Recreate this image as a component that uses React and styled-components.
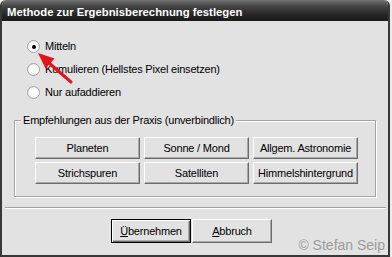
import React from "react";
import styled, { createGlobalStyle } from "styled-components";

const GlobalStyle = createGlobalStyle`
  html, body { margin: 0; padding: 0; background: #ececec; }
  body {
    width: 392px;
    height: 257px;
    overflow: hidden;
    font-family: "Liberation Sans", Arial, sans-serif;
  }
  * { box-sizing: border-box; }
`;

const Window = styled.div`
  position: relative;
  width: 390px;
  height: 257px;
  display: flex;
  flex-direction: column;
  background: #e2e2e2;
  border: 2px solid #383838;
  border-top: 0;
  border-radius: 6px 6px 0 0;
  overflow: hidden;
`;

const TitleBar = styled.div`
  flex: none;
  height: 21px;
  padding: 5px 0 0 5px;
  background: linear-gradient(#727272, #444 30%, #262626 70%, #1a1a1a);
  color: #fff;
  font-weight: bold;
  font-size: 11.3px;
  line-height: 14px;
  white-space: nowrap;
`;

const Content = styled.div`
  flex: 1;
  display: flex;
  flex-direction: column;
  padding-top: 14px;
  font-size: 11px;
  letter-spacing: -0.2px;
  color: #000;
`;

const RadioList = styled.div`
  display: flex;
  flex-direction: column;
  padding-left: 25px;
`;

const RadioRow = styled.label`
  display: flex;
  align-items: center;
  gap: 5px;
  height: 23px;
  line-height: 13px;
`;

const RadioCircle = styled.span`
  position: relative;
  flex: none;
  width: 13px;
  height: 13px;
  border-radius: 50%;
  border: 1px solid #a2a2a2;
  background: radial-gradient(circle at 62% 62%, #fff 40%, #dedede 100%);
  &::after {
    content: "";
    display: ${(p) => (p.$checked ? "block" : "none")};
    position: absolute;
    left: 3.5px;
    top: 3.5px;
    width: 4px;
    height: 4px;
    border-radius: 50%;
    background: #000;
  }
`;

const Group = styled.fieldset`
  margin: 10px 12px 0;
  padding: 10px 17px 12px 20px;
  border: 1px solid #a3a3a3;
  box-shadow: inset 1px 1px #fff, 1px 1px #fff;
  min-width: 0;
`;

const Legend = styled.legend`
  padding: 0 2px;
  margin-left: -14px;
  line-height: 13px;
  background: #e2e2e2;
`;

const Grid = styled.div`
  display: grid;
  grid-template-columns: repeat(3, 105px);
  grid-auto-rows: 22px;
  gap: 3px 4px;
`;

const Button = styled.button`
  display: flex;
  align-items: center;
  justify-content: center;
  width: ${(p) => p.$width || "auto"};
  height: ${(p) => p.$height || "auto"};
  margin: 0;
  padding: 0;
  font-family: inherit;
  font-size: 11px;
  letter-spacing: -0.2px;
  color: #000;
  background: #e2e2e2;
  border: 1px solid;
  border-color: ${(p) => (p.$default ? "#000" : "#fff #6c6c6c #6c6c6c #fff")};
  box-shadow: ${(p) =>
    p.$default
      ? "inset 1px 1px #fff, inset -1px -1px #6c6c6c, inset -2px -2px #a9a9a9"
      : "inset -1px -1px #a9a9a9"};
  border-radius: 0;
  white-space: nowrap;
`;

const Mnemonic = styled.span`
  text-decoration: underline;
`;

const Separator = styled.div`
  height: 2px;
  margin: 10px 2px 0 3px;
  border-top: 1px solid #a0a0a0;
  border-bottom: 1px solid #fff;
`;

const ButtonRow = styled.div`
  display: flex;
  justify-content: center;
  gap: 1px;
  margin-top: 10px;
  padding-right: 7px;
`;

const Watermark = styled.div`
  position: absolute;
  right: 3px;
  bottom: 2px;
  font-size: 14px;
  line-height: 16px;
  color: #9c9c9c;
  white-space: nowrap;
`;

const ArrowOverlay = styled.svg`
  position: absolute;
  left: -2px;
  top: 0;
  pointer-events: none;
`;

const presets = [
  "Planeten",
  "Sonne / Mond",
  "Allgem. Astronomie",
  "Strichspuren",
  "Satelliten",
  "Himmelshintergrund",
];

const options = [
  { label: "Mitteln", checked: true },
  { label: "Kumulieren (Hellstes Pixel einsetzen)" },
  { label: "Nur aufaddieren" },
];

export default function App() {
  return (
    <>
      <GlobalStyle />
      <Window>
        <TitleBar>Methode zur Ergebnisberechnung festlegen</TitleBar>
        <Content>
          <RadioList>
            {options.map((o) => (
              <RadioRow key={o.label}>
                <RadioCircle $checked={o.checked} />
                {o.label}
              </RadioRow>
            ))}
          </RadioList>
          <Group>
            <Legend>Empfehlungen aus der Praxis (unverbindlich)</Legend>
            <Grid>
              {presets.map((p) => (
                <Button key={p}>{p}</Button>
              ))}
            </Grid>
          </Group>
          <Separator />
          <ButtonRow>
            <Button $default $width="80px" $height="24px">
              <span>
                <Mnemonic>Ü</Mnemonic>bernehmen
              </span>
            </Button>
            <Button $width="80px" $height="24px">
              <span>
                <Mnemonic>A</Mnemonic>bbruch
              </span>
            </Button>
          </ButtonRow>
        </Content>
        <Watermark>© Stefan Seip</Watermark>
        <ArrowOverlay width="100" height="100" viewBox="0 0 100 100">
          <line x1="49" y1="63" x2="71" y2="82" stroke="#e3141b" strokeWidth="3" strokeLinecap="round" />
          <polygon points="38,53 54.5,58.5 45.5,68.5" fill="#e3141b" />
        </ArrowOverlay>
      </Window>
    </>
  );
}
